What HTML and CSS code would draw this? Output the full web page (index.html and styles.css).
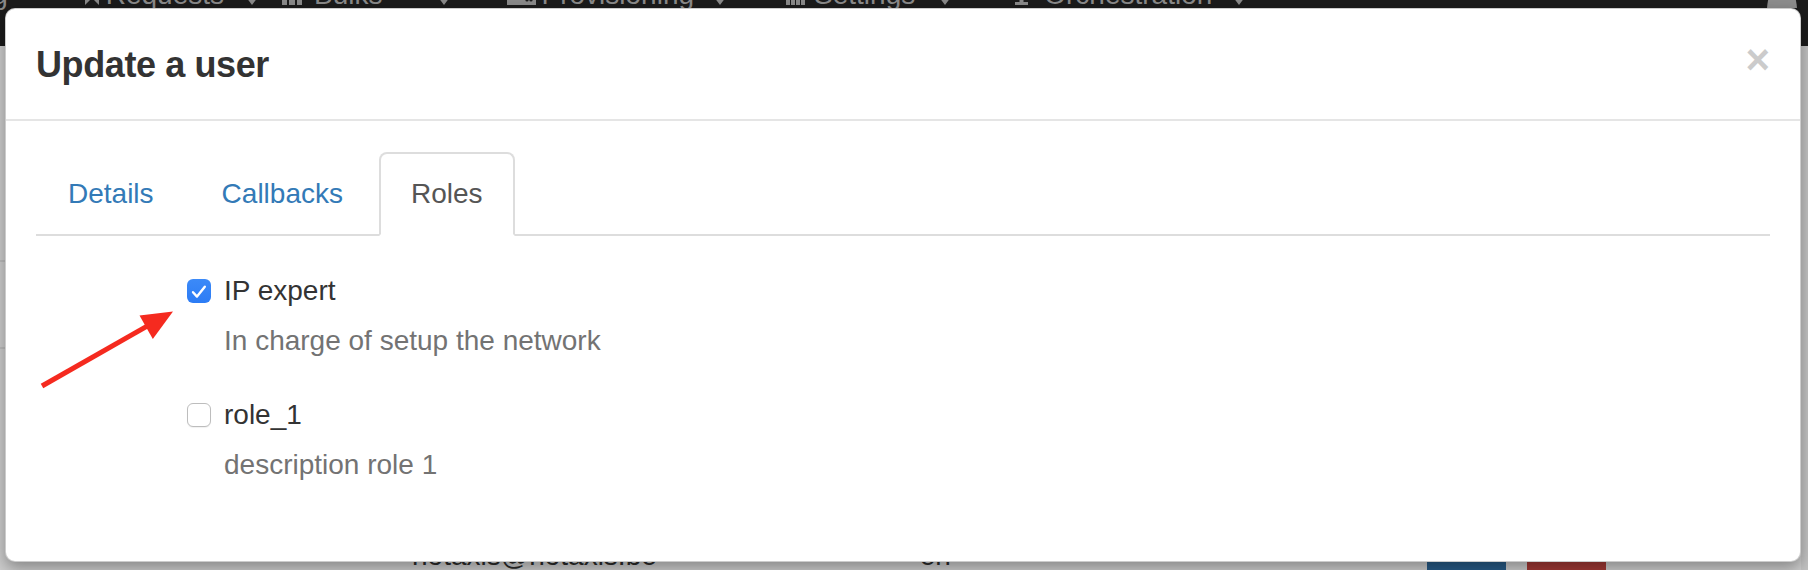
FILE: index.html
```html
<!DOCTYPE html>
<html lang="en">
<head>
<meta charset="utf-8">
<title>Update a user</title>
<link rel="stylesheet" href="styles.css">
</head>
<body>
<div class="page">
  <header class="navbar">
    <nav class="nav-items">
      <span class="nav-item first"><span class="nav-text">Monitoring</span></span>
      <span class="nav-item requests">
        <svg class="ico ico-bookmark" width="18" height="20" viewBox="0 0 18 20"><path d="M2 0H16V20L9 13L2 20Z" fill="currentColor"/></svg>
        <span class="nav-text">Requests</span><span class="caret"></span>
      </span>
      <span class="nav-item bulks">
        <svg class="ico ico-grid" width="20" height="20" viewBox="0 0 20 20" fill="currentColor"><rect x="0" y="0" width="5" height="5"/><rect x="7" y="0" width="6" height="5"/><rect x="15" y="0" width="5" height="5"/><rect x="0" y="7" width="5" height="6"/><rect x="7" y="7" width="6" height="6"/><rect x="15" y="7" width="5" height="6"/><rect x="0" y="15" width="5" height="5"/><rect x="7" y="15" width="6" height="5"/><rect x="15" y="15" width="5" height="5"/></svg>
        <span class="nav-text">Bulks</span><span class="caret"></span>
      </span>
      <span class="nav-item prov">
        <svg class="ico ico-hdd" width="29" height="20" viewBox="0 0 29 20"><path d="M5 0H24L29 9V20H0V9Z" fill="currentColor"/><circle cx="20" cy="15" r="1.6" fill="#1b1b1b"/><circle cx="24" cy="15" r="1.6" fill="#1b1b1b"/></svg>
        <span class="nav-text">Provisioning</span><span class="caret"></span>
      </span>
      <span class="nav-item settings">
        <svg class="ico ico-stats" width="20" height="20" viewBox="0 0 20 20" fill="currentColor"><rect x="0" y="10" width="4" height="10"/><rect x="5" y="4" width="4" height="16"/><rect x="10" y="0" width="4" height="20"/><rect x="15" y="7" width="4" height="13"/></svg>
        <span class="nav-text">Settings</span><span class="caret"></span>
      </span>
      <span class="nav-item orch">
        <svg class="ico ico-tree" width="19" height="20" viewBox="0 0 19 20" fill="currentColor"><ellipse cx="9.5" cy="7" rx="9" ry="7"/><rect x="7.5" y="10" width="4" height="10"/><rect x="3" y="17" width="13" height="3"/></svg>
        <span class="nav-text">Orchestration</span><span class="caret"></span>
      </span>
    </nav>
    <svg class="user-ico" width="30" height="22" viewBox="0 0 30 22"><path d="M9 0H21C26 4 29 10 30 22H0C1 10 4 4 9 0Z" fill="currentColor"/></svg>
  </header>
  <div class="below">
    <main class="content">
      <div class="row-line line-a"></div>
      <div class="row-line line-b"></div>
      <div class="user-row">
        <span class="email">notaxis@notaxis.be</span>
        <span class="lang">en</span>
        <span class="btn btn-edit"></span>
        <span class="btn btn-del"></span>
      </div>
    </main>
    <div class="scrollbar"></div>
  </div>
</div>

<div class="modal">
  <div class="modal-header">
    <h4 class="modal-title">Update a user</h4>
    <button class="close" type="button">&times;</button>
  </div>
  <div class="modal-body">
    <ul class="nav-tabs">
      <li><a href="#">Details</a></li>
      <li><a href="#">Callbacks</a></li>
      <li class="active"><a href="#">Roles</a></li>
    </ul>
    <div class="roles">
      <div class="role">
        <label class="role-label">
          <span class="cb checked"><svg width="24" height="24" viewBox="0 0 24 24"><path d="M6 13.2L10 17.6L17.8 7.8" fill="none" stroke="#fff" stroke-width="2.4" stroke-linecap="round" stroke-linejoin="round"/></svg></span>
          <span class="role-name">IP expert</span>
        </label>
        <p class="help">In charge of setup the network</p>
      </div>
      <div class="role">
        <label class="role-label">
          <span class="cb unchecked"></span>
          <span class="role-name">role_1</span>
        </label>
        <p class="help">description role 1</p>
      </div>
    </div>
  </div>
</div>

<svg class="arrow" width="200" height="400" viewBox="0 0 200 400">
  <line x1="42" y1="386" x2="148" y2="325.7" stroke="#f52a1f" stroke-width="5" stroke-linecap="butt"/>
  <polygon points="173,311.5 152.8,339 139.5,315.6" fill="#f52a1f"/>
</svg>
</body>
</html>
```

FILE: styles.css
```css
html, body {
  margin: 0;
  padding: 0;
}

body {
  width: 1808px;
  height: 570px;
  overflow: hidden;
  position: relative;
  font-family: "Liberation Sans", Arial, Helvetica, sans-serif;
  background: #cdcdcd;
}

/* ---------- page behind the backdrop ---------- */
.page {
  display: flex;
  flex-direction: column;
  height: 570px;
}

.navbar {
  height: 46px;
  flex: none;
  background: #1b1b1b;
  color: #8a8a8a;
  display: flex;
  overflow: hidden;
  font-size: 28px;
  line-height: 40px;
}

.nav-items {
  display: flex;
  align-items: center;
  height: 40px;
  margin-top: -25px;
}

.nav-item {
  display: flex;
  align-items: center;
  white-space: nowrap;
}

.nav-item .ico {
  flex: none;
}

.first { margin-left: -123px; }
.requests { margin-left: 75px; }
.requests .nav-text { margin-left: 5px; }
.requests .caret { margin-left: 22px; }

.bulks { margin-left: 24px; }
.bulks .nav-text { margin-left: 12px; }
.bulks .caret { margin-left: 55px; }

.prov { margin-left: 57px; }
.prov .nav-text { margin-left: 6px; }
.prov .caret { margin-left: 20px; }

.settings { margin-left: 60px; }
.settings .nav-text { margin-left: 8px; }
.settings .caret { margin-left: 24px; }

.orch { margin-left: 61px; }
.orch .nav-text { margin-left: 13px; }
.orch .caret { margin-left: 21px; }

.caret {
  width: 0;
  height: 0;
  border-top: 8px solid currentColor;
  border-left: 6px solid transparent;
  border-right: 6px solid transparent;
  margin-top: 12px;
}

.user-ico {
  margin-left: auto;
  margin-right: 11px;
  margin-top: -14px;
  color: #8d8d8d;
}

.below {
  flex: 1;
  display: flex;
}

.content {
  flex: 1;
  display: flex;
  flex-direction: column;
}

.row-line {
  border-top: 2px solid #bcbcbc;
}

.line-a { margin-top: 214px; }
.line-b { margin-top: 85px; }

.user-row {
  margin-top: 187px;
  height: 40px;
  display: flex;
  align-items: flex-start;
  font-size: 28px;
  line-height: 40px;
  color: #2b2b2b;
}

.email { margin-left: 412px; }
.lang { margin-left: 263px; }

.btn {
  display: block;
  width: 79px;
  height: 56px;
  margin-top: -6px;
  border-radius: 6px;
}

.btn-edit {
  margin-left: 476px;
  background: #285b87;
}

.btn-del {
  margin-left: 21px;
  background: #a23935;
}

.scrollbar {
  width: 7px;
  background: #c3c3c3;
}

/* ---------- modal ---------- */
.modal {
  position: absolute;
  left: 5px;
  top: 8px;
  width: 1796px;
  box-sizing: border-box;
  background: #fff;
  border: 1px solid rgba(0, 0, 0, 0.2);
  border-radius: 10px;
  box-shadow: 0 6px 16px rgba(0, 0, 0, 0.35);
}

.modal-header {
  display: flex;
  justify-content: space-between;
  align-items: flex-start;
  padding: 30px 30px 29px;
  border-bottom: 2px solid #e5e5e5;
}

.modal-title {
  margin: 0;
  font-size: 36px;
  font-weight: bold;
  line-height: 1.42857;
  color: #333;
  letter-spacing: -0.4px;
}

.close {
  margin: 0;
  padding: 0;
  border: 0;
  background: none;
  font-family: inherit;
  font-size: 42px;
  font-weight: bold;
  line-height: 1;
  color: #000;
  opacity: 0.2;
}

.modal-body {
  padding: 31px 30px 30px;
}

.nav-tabs {
  display: flex;
  list-style: none;
  margin: 0;
  padding: 0;
  border-bottom: 2px solid #ddd;
}

.nav-tabs li {
  margin-bottom: -2px;
  margin-right: 4px;
}

.nav-tabs a {
  display: block;
  padding: 20px 30px;
  border: 2px solid transparent;
  border-radius: 8px 8px 0 0;
  color: #337ab7;
  font-size: 28px;
  line-height: 40px;
  text-decoration: none;
}

.nav-tabs .active a {
  color: #555;
  background: #fff;
  border-color: #ddd #ddd transparent;
}

.roles {
  padding: 35px 0 46px 151px;
}

.role + .role {
  margin-top: 34px;
}

.role-label {
  display: flex;
  align-items: center;
  gap: 13px;
  font-size: 28px;
  line-height: 40px;
  color: #333;
}

.cb {
  display: block;
  flex: none;
  width: 24px;
  height: 24px;
  box-sizing: border-box;
  border-radius: 6px;
}

.cb svg {
  display: block;
}

.cb.checked {
  background: linear-gradient(#3c8af8, #2c7cf5);
}

.cb.unchecked {
  background: #fff;
  border: 1.5px solid #bdbdbd;
  box-shadow: 0 1px 1px rgba(0, 0, 0, 0.06);
}

.help {
  margin: 10px 0 0 37px;
  font-size: 28px;
  line-height: 40px;
  color: #737373;
}

/* ---------- annotation arrow ---------- */
.arrow {
  position: absolute;
  left: 0;
  top: 0;
  pointer-events: none;
}
```
